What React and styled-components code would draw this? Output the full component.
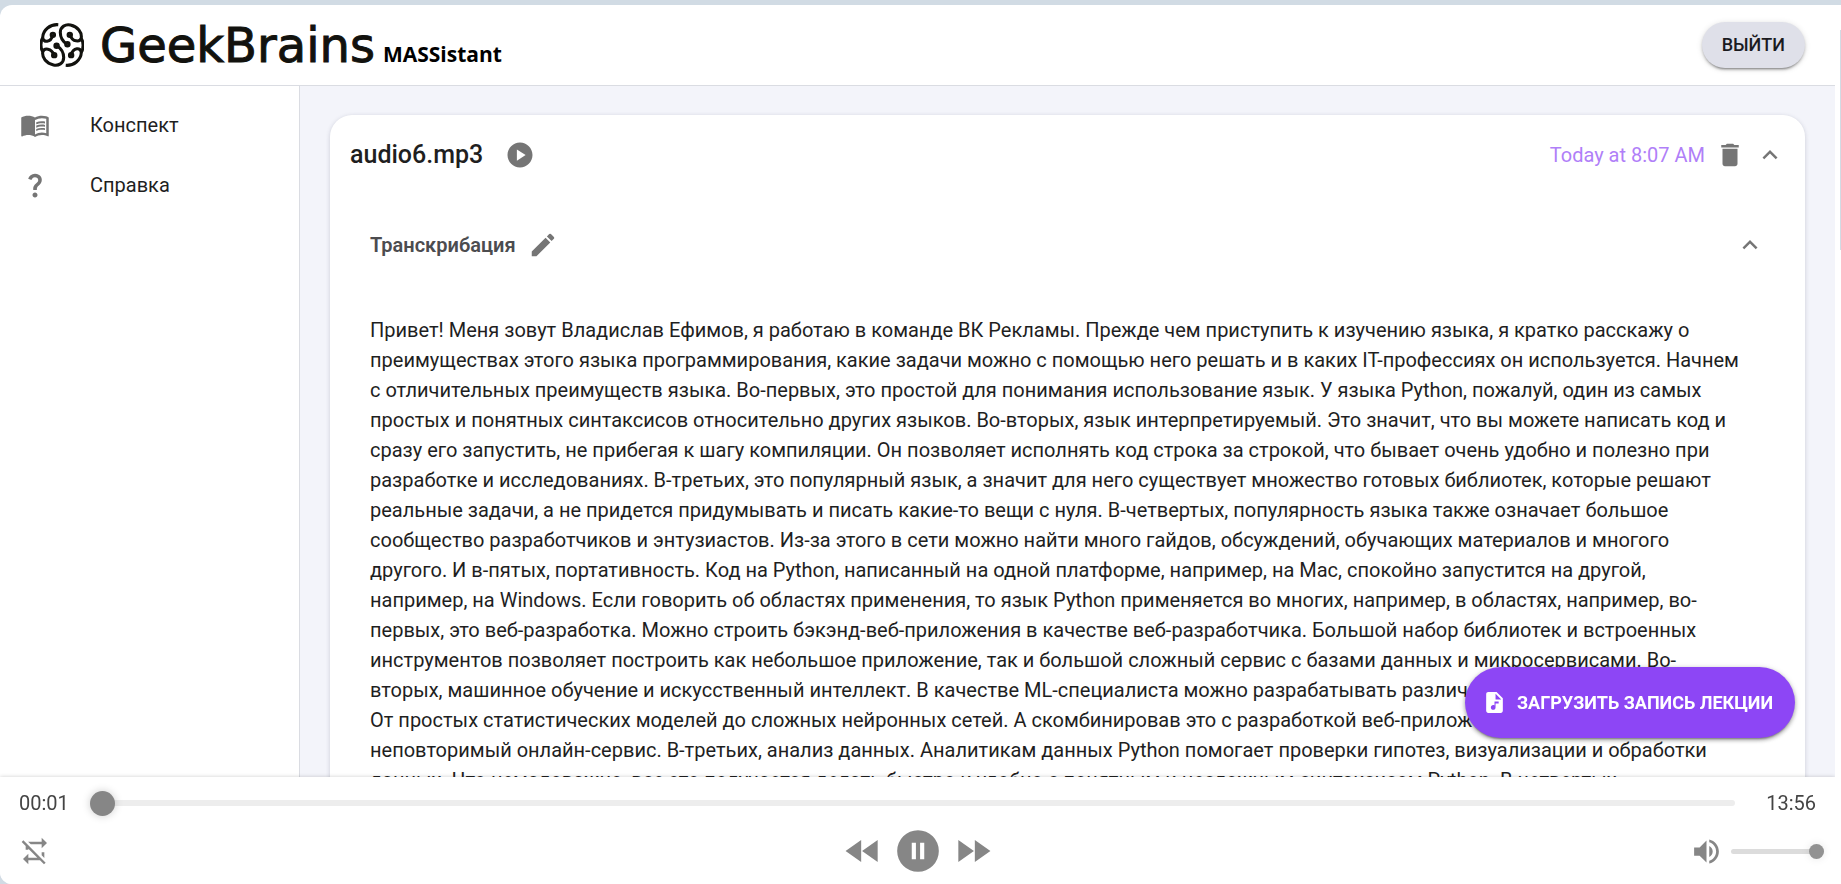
import React, { useState } from 'react';
import styled, { createGlobalStyle, css } from 'styled-components';
import {
  MdMenuBook,
  MdQuestionMark,
  MdPlayCircle,
  MdEdit,
  MdDelete,
  MdExpandLess,
  MdAudioFile,
} from 'react-icons/md';

const GlobalStyle = createGlobalStyle`
  * { box-sizing: border-box; }
  body {
    margin: 0;
    background: #d1dbe4;
    color: #1f1f1f;
    font-family: Roboto, "Liberation Sans", sans-serif;
    font-size: 20px;
    line-height: 30px;
  }
  button, input { font: inherit; }
`;

const Page = styled.div`
  height: 100vh;
  padding-top: 5px;
`;

const Window = styled.div`
  display: flex;
  height: 100%;
  overflow: hidden;
  background: #fff;
  border-radius: 12px 0 0 12px;
`;

const Shell = styled.div`
  display: flex;
  flex-direction: column;
  flex: 1;
  min-width: 0;
`;

const ScrollTrack = styled.div`
  flex: none;
  width: 6px;
  padding: 25px 0 0 5px;
`;

const ScrollThumb = styled.div`
  height: 220px;
  background: #d1dbe4;
`;

const Header = styled.header`
  display: flex;
  align-items: center;
  justify-content: space-between;
  flex: none;
  height: 81px;
  padding: 0 30px 0 40px;
  border-bottom: 1px solid #dadce2;
`;

const Brand = styled.a`
  display: flex;
  align-items: center;
  color: #12120e;
  text-decoration: none;
`;

const BrandNames = styled.span`
  display: flex;
  align-items: baseline;
  gap: 8px;
  margin-left: 16px;
`;

const BrandName = styled.span`
  font: 48px/60px "DejaVu Sans", sans-serif;
  -webkit-text-stroke: 1px currentColor;
`;

const ProductName = styled.span`
  color: #000;
  font: bold 21px/30px "Comic Sans MS", "Open Sans", sans-serif;
`;

const LogoutButton = styled.button`
  height: 46px;
  padding: 0 20px;
  border: 0;
  border-radius: 25px;
  background: #dfe0e9;
  color: #1b1b1f;
  font-size: 18px;
  font-weight: 500;
  text-transform: uppercase;
  box-shadow: 0 3px 2px -2px rgba(0, 0, 0, 0.3), 0 2px 3px rgba(0, 0, 0, 0.18), 0 1px 6px rgba(0, 0, 0, 0.12);
`;

const Columns = styled.div`
  display: flex;
  flex: 1;
  min-height: 0;
`;

const Sidebar = styled.nav`
  flex: none;
  width: 300px;
  padding-top: 9px;
  border-right: 1px solid #dadce2;
`;

const NavLink = styled.a`
  display: flex;
  align-items: center;
  gap: 40px;
  height: 60px;
  padding: 0 20px;
  color: #1f1f1f;
  text-decoration: none;

  svg { color: #757575; }
`;

const Content = styled.main`
  flex: 1;
  min-width: 0;
  overflow-y: auto;
  scrollbar-width: none;
  padding: 29px 30px;
  background: #f3f4fa;
`;

const Card = styled.article`
  padding: 10px 20px 40px;
  border-radius: 22px;
  background: #fff;
  box-shadow: 0 1px 4px rgba(60, 64, 90, 0.22);
`;

const CardHeader = styled.div`
  display: flex;
  align-items: center;
  justify-content: space-between;
  height: 60px;
`;

const SectionHeader = styled(CardHeader)`
  margin: 30px 20px 0;
`;

const Group = styled.div`
  display: flex;
  align-items: center;
  gap: ${({ $gap }) => $gap}px;
`;

const FileName = styled.h2`
  margin: 0;
  font-size: 25px;
  font-weight: 500;
`;

const SectionTitle = styled.h3`
  margin: 0;
  color: #4c4c4f;
  font-size: 20px;
  font-weight: 600;
`;

const Timestamp = styled.time`
  color: #b07ff8;
`;

const IconButton = styled.button`
  display: flex;
  align-items: center;
  justify-content: center;
  flex: none;
  padding: 0;
  border: 0;
  background: none;
  color: ${({ $color }) => $color || '#757575'};
`;

const Transcript = styled.p`
  margin: 40px 20px 0;
  white-space: pre-line;
`;

const UploadButton = styled.button`
  position: fixed;
  right: 46px;
  bottom: 146px;
  display: flex;
  align-items: center;
  gap: 10px;
  height: 71px;
  padding: 0 22px 0 17px;
  border: 0;
  border-radius: 36px;
  background: #8d46f5;
  color: #fff;
  font-size: 18px;
  font-weight: 700;
  text-transform: uppercase;
  box-shadow: 0 3px 2px -2px rgba(0, 0, 0, 0.3), 0 2px 4px rgba(0, 0, 0, 0.3), 0 1px 6px rgba(0, 0, 0, 0.14);
`;

const Player = styled.footer`
  position: relative;
  flex: none;
  padding-top: 11px;
  background: #fff;
  box-shadow: 0 0 4px rgba(0, 0, 0, 0.2);
  clip-path: inset(-8px 0 0 0);
`;

const ProgressRow = styled.div`
  display: flex;
  align-items: center;
  height: 30px;
  padding: 0 19px;
  color: #444;
`;

const ControlsRow = styled.div`
  display: grid;
  grid-template-columns: 1fr auto 1fr;
  align-items: center;
  height: 66px;
`;

const Modes = styled(Group)`
  padding-left: 19px;
`;

const Transport = styled(Group)`
  justify-content: center;
`;

const Volume = styled(Group)`
  justify-content: flex-end;
  padding-right: 11px;
`;

const thumb = css`
  appearance: none;
  width: ${({ $thumb }) => $thumb}px;
  height: ${({ $thumb }) => $thumb}px;
  margin-top: ${({ $thumb, $track }) => Math.round(($track - $thumb) / 2)}px;
  border: 0;
  border-radius: 50%;
  background: ${({ $thumbColor }) => $thumbColor};
  box-shadow: 0 0 8px ${({ $glow }) => $glow};
`;

const Slider = styled.input`
  appearance: none;
  height: 26px;
  margin: 0;
  background: none;

  &::-webkit-slider-runnable-track {
    height: ${({ $track }) => $track}px;
    border-radius: 3px;
    background: ${({ $trackColor }) => $trackColor};
  }
  &::-webkit-slider-thumb { ${thumb} }
`;

const ProgressSlider = styled(Slider)`
  flex: 1;
  min-width: 0;
  margin: 0 31px 0 21px;
`;

const VolumeSlider = styled(Slider)`
  width: 93px;
`;

const PATHS = {
  repeatOff:
    'M2,5.27L3.28,4L20,20.72L18.73,22L15.73,19H7V22L3,18L7,14V17H13.73L7,10.27V11H5V8.27L2,5.27M17,13H19V17.18L17,15.18V13M17,5V2L21,6L17,10V7H8.82L6.82,5H17Z',
  rewind: 'M11.5,12L20,18V6M11,18V6L2.5,12L11,18Z',
  pause:
    'M15,16H13V8H15M11,16H9V8H11M12,2A10,10 0 0,0 2,12A10,10 0 0,0 12,22A10,10 0 0,0 22,12A10,10 0 0,0 12,2Z',
  forward: 'M13,6V18L21.5,12M4,18L12.5,12L4,6V18Z',
  volume:
    'M14,3.23V5.29C16.89,6.15 19,8.83 19,12C19,15.17 16.89,17.84 14,18.7V20.77C18,19.86 21,16.28 21,12C21,7.72 18,4.14 14,3.23M16.5,12C16.5,10.23 15.5,8.71 14,7.97V16C15.5,15.29 16.5,13.76 16.5,12M3,9V15H7L12,20V4L7,9H3Z',
};

function PlayerButton({ icon, size, label }) {
  return (
    <IconButton type="button" aria-label={label} $color="#868686">
      <svg width={size} height={size} viewBox="0 0 24 24" fill="currentColor" aria-hidden="true">
        <path d={PATHS[icon]} />
      </svg>
    </IconButton>
  );
}

function BrainHalf({ transform }) {
  return (
    <g transform={transform}>
      <path d="M54 5C30 3 9 21 8 42C9 60 32 58 38 36" />
      <path d="M80 63C66 54 60 44 60 28C60 10 76 3 90 6C112 11 124 27 122 44C118 58 96 56 89 36" />
      <path d="M8 44C1 54 1 74 8 84" />
      <circle cx="38" cy="35" r="5" />
      <circle cx="88" cy="35" r="5" />
      <circle cx="81" cy="63" r="5" />
    </g>
  );
}

function BrainLogo() {
  return (
    <svg width="44" height="44" viewBox="0 0 130 130" fill="none" stroke="#12120e" strokeWidth="9" aria-hidden="true">
      <BrainHalf />
      <BrainHalf transform="rotate(180 65 65)" />
    </svg>
  );
}

const TRANSCRIPT = `Привет! Меня зовут Владислав Ефимов, я работаю в команде ВК Рекламы. Прежде чем приступить к изучению языка, я кратко расскажу о
преимуществах этого языка программирования, какие задачи можно с помощью него решать и в каких IT-профессиях он используется. Начнем
с отличительных преимуществ языка. Во-первых, это простой для понимания использование язык. У языка Python, пожалуй, один из самых
простых и понятных синтаксисов относительно других языков. Во-вторых, язык интерпретируемый. Это значит, что вы можете написать код и
сразу его запустить, не прибегая к шагу компиляции. Он позволяет исполнять код строка за строкой, что бывает очень удобно и полезно при
разработке и исследованиях. В-третьих, это популярный язык, а значит для него существует множество готовых библиотек, которые решают
реальные задачи, а не придется придумывать и писать какие-то вещи с нуля. В-четвертых, популярность языка также означает большое
сообщество разработчиков и энтузиастов. Из-за этого в сети можно найти много гайдов, обсуждений, обучающих материалов и многого
другого. И в-пятых, портативность. Код на Python, написанный на одной платформе, например, на Mac, спокойно запустится на другой,
например, на Windows. Если говорить об областях применения, то язык Python применяется во многих, например, в областях, например, во-
первых, это веб-разработка. Можно строить бэкэнд-веб-приложения в качестве веб-разработчика. Большой набор библиотек и встроенных
инструментов позволяет построить как небольшое приложение, так и большой сложный сервис с базами данных и микросервисами. Во-
вторых, машинное обучение и искусственный интеллект. В качестве ML-специалиста можно разрабатывать различные модели.
От простых статистических моделей до сложных нейронных сетей. А скомбинировав это с разработкой веб-приложений, получится
неповторимый онлайн-сервис. В-третьих, анализ данных. Аналитикам данных Python помогает проверки гипотез, визуализации и обработки
данных. Что немаловажно, все это получается делать быстро и удобно с понятным и несложным синтаксисом Python. В-четвертых,`;

export default function App() {
  const [progress, setProgress] = useState(0);
  const [volume, setVolume] = useState(100);

  return (
    <>
      <GlobalStyle />
      <Page>
        <Window>
          <Shell>
            <Header>
              <Brand href="#">
                <BrainLogo />
                <BrandNames>
                  <BrandName>GeekBrains</BrandName>
                  <ProductName>MASSistant</ProductName>
                </BrandNames>
              </Brand>
              <LogoutButton type="button">Выйти</LogoutButton>
            </Header>
            <Columns>
              <Sidebar>
                <NavLink href="#summary">
                  <MdMenuBook size={30} />
                  Конспект
                </NavLink>
                <NavLink href="#help">
                  <MdQuestionMark size={30} />
                  Справка
                </NavLink>
              </Sidebar>
              <Content>
                <Card>
                  <CardHeader>
                    <Group $gap={22}>
                      <FileName>audio6.mp3</FileName>
                      <IconButton type="button" aria-label="Воспроизвести">
                        <MdPlayCircle size={30} />
                      </IconButton>
                    </Group>
                    <Group $gap={10}>
                      <Timestamp>Today at 8:07 AM</Timestamp>
                      <IconButton type="button" aria-label="Удалить">
                        <MdDelete size={30} />
                      </IconButton>
                      <IconButton type="button" aria-label="Свернуть запись">
                        <MdExpandLess size={30} />
                      </IconButton>
                    </Group>
                  </CardHeader>
                  <SectionHeader>
                    <Group $gap={12}>
                      <SectionTitle>Транскрибация</SectionTitle>
                      <IconButton type="button" aria-label="Редактировать">
                        <MdEdit size={30} />
                      </IconButton>
                    </Group>
                    <IconButton type="button" aria-label="Свернуть транскрибацию">
                      <MdExpandLess size={30} />
                    </IconButton>
                  </SectionHeader>
                  <Transcript>{TRANSCRIPT}</Transcript>
                </Card>
              </Content>
            </Columns>
            <Player>
              <ProgressRow>
                <span>00:01</span>
                <ProgressSlider
                  type="range"
                  aria-label="Позиция"
                  value={progress}
                  onChange={(e) => setProgress(e.target.value)}
                  $thumb={25}
                  $track={6}
                  $trackColor="#ededed"
                  $thumbColor="#868686"
                  $glow="rgba(0, 0, 0, 0.2)"
                />
                <span>13:56</span>
              </ProgressRow>
              <ControlsRow>
                <Modes $gap={0}>
                  <PlayerButton icon="repeatOff" size={32} label="Повтор выключен" />
                </Modes>
                <Transport $gap={8}>
                  <PlayerButton icon="rewind" size={44} label="Назад" />
                  <PlayerButton icon="pause" size={50} label="Пауза" />
                  <PlayerButton icon="forward" size={44} label="Вперёд" />
                </Transport>
                <Volume $gap={8}>
                  <PlayerButton icon="volume" size={33} label="Звук" />
                  <VolumeSlider
                    type="range"
                    aria-label="Громкость"
                    value={volume}
                    onChange={(e) => setVolume(e.target.value)}
                    $thumb={15}
                    $track={5}
                    $trackColor="#dcdcdc"
                    $thumbColor="#929292"
                    $glow="rgba(0, 0, 0, 0.1)"
                  />
                </Volume>
              </ControlsRow>
            </Player>
          </Shell>
          <ScrollTrack>
            <ScrollThumb />
          </ScrollTrack>
        </Window>
        <UploadButton type="button">
          <MdAudioFile size={25} />
          Загрузить запись лекции
        </UploadButton>
      </Page>
    </>
  );
}
